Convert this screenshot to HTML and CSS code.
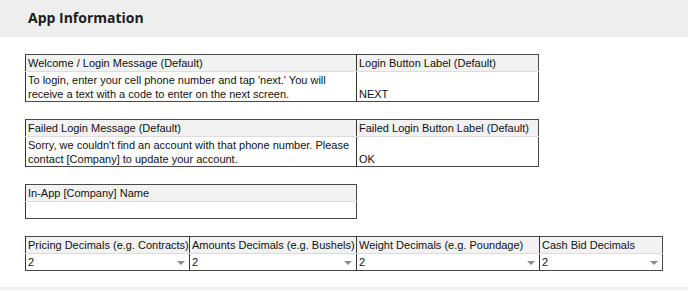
FILE: index.html
```html
<!DOCTYPE html>
<html lang="en">

<head>
    <meta charset="UTF-8" />
    <meta name="viewport" content="width=device-width, initial-scale=1.0" />
    <title>App Information</title>
    <link rel="stylesheet" href="styles.css">
</head>

<body>
    <header class="page-header">
        <h1>App Information</h1>
    </header>

    <main class="settings">
        <!-- Welcome message -->
        <table class="field-table wide">
            <colgroup>
                <col class="col-message">
                <col class="col-label">
            </colgroup>
            <tr>
                <th>Welcome / Login Message (Default)</th>
                <th>Login Button Label (Default)</th>
            </tr>
            <tr class="tall">
                <td>To login, enter your cell phone number and tap 'next.' You will receive a text with a code to enter on the next screen.</td>
                <td class="bottom">NEXT</td>
            </tr>
        </table>

        <!-- Failed login -->
        <table class="field-table wide">
            <colgroup>
                <col class="col-message">
                <col class="col-label">
            </colgroup>
            <tr>
                <th>Failed Login Message (Default)</th>
                <th>Failed Login Button Label (Default)</th>
            </tr>
            <tr class="tall">
                <td>Sorry, we couldn't find an account with that phone number. Please contact [Company] to update your account.</td>
                <td class="bottom">OK</td>
            </tr>
        </table>

        <!-- Company name -->
        <table class="field-table narrow">
            <tr>
                <th>In-App [Company] Name</th>
            </tr>
            <tr>
                <td></td>
            </tr>
        </table>

        <!-- Decimals -->
        <table class="field-table decimals">
            <colgroup>
                <col class="col-pricing">
                <col class="col-amounts">
                <col class="col-weight">
                <col class="col-cash">
            </colgroup>
            <tr>
                <th>Pricing Decimals (e.g. Contracts)</th>
                <th>Amounts Decimals (e.g. Bushels)</th>
                <th>Weight Decimals (e.g. Poundage)</th>
                <th>Cash Bid Decimals</th>
            </tr>
            <tr>
                <td class="select">2<span class="caret"></span></td>
                <td class="select">2<span class="caret"></span></td>
                <td class="select">2<span class="caret"></span></td>
                <td class="select">2<span class="caret"></span></td>
            </tr>
        </table>
    </main>

    <div class="page-footer"></div>
</body>

</html>
```

FILE: styles.css
```css
/* Global Styles */
body {
    margin: 0;
    font-family: 'Liberation Sans', Arial, sans-serif;
    background: #fff;
    color: #111;
}

/* Header */
.page-header {
    background: #eeeeee;
    height: 37px;
    padding: 0 28px 3px;
    box-sizing: border-box;
    display: flex;
    align-items: center;
}

.page-header h1 {
    margin: 0;
    font-family: 'Open Sans', sans-serif;
    font-size: 14px;
    font-weight: 700;
    color: #1c1c1c;
}

/* Layout */
.settings {
    padding: 17px 0 0 25px;
    display: flex;
    flex-direction: column;
    align-items: flex-start;
    gap: 17px;
}

.field-table {
    border-collapse: collapse;
    table-layout: fixed;
    border: 1px solid #4a4a4a;
    font-size: 11px;
}

.field-table th,
.field-table td {
    padding: 0 2px;
    text-align: left;
    font-weight: normal;
    vertical-align: top;
    border-left: 1px solid #333;
}

.field-table th {
    background: #f2f2f2;
    height: 16px;
    line-height: 16px;
    border-bottom: 1px solid #dcdcdc;
    white-space: nowrap;
    overflow: hidden;
}

.field-table td {
    height: 16px;
    line-height: 14px;
}

.tall td {
    height: 30px;
    padding-top: 1px;
    padding-bottom: 0;
    box-sizing: border-box;
}

.field-table td.bottom {
    vertical-align: bottom;
}

.wide {
    width: 514px;
}

.col-message {
    width: 331px;
}

.narrow {
    width: 332px;
}

.decimals {
    width: 638px;
}

.col-pricing {
    width: 164px;
}

.col-amounts {
    width: 167px;
}

.col-weight {
    width: 183px;
}

/* Select fields */
.field-table td.select {
    position: relative;
    vertical-align: middle;
    line-height: 16px;
}

.caret {
    position: absolute;
    right: 4px;
    top: 7px;
    width: 0;
    height: 0;
    border-left: 4px solid transparent;
    border-right: 4px solid transparent;
    border-top: 4px solid #8a8a8a;
}

.page-footer {
    margin-top: 16px;
    border-top: 3px solid #f0f0f0;
}
```
